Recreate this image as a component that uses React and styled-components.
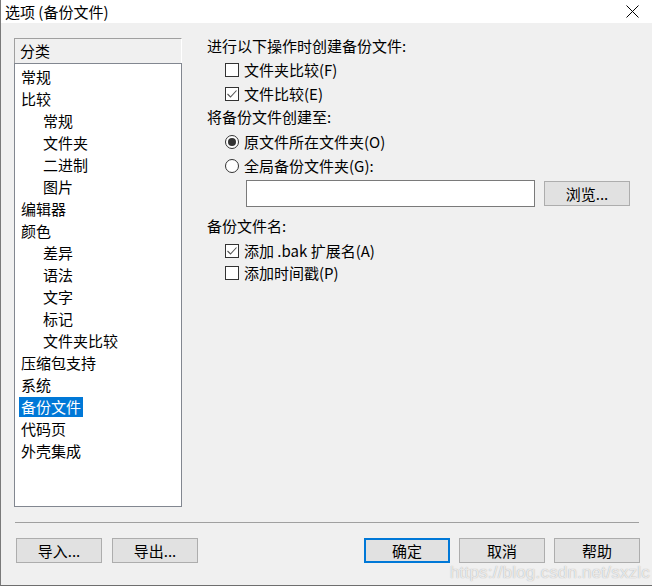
import React from 'react'
import styled, { createGlobalStyle } from 'styled-components'

const GlobalStyle = createGlobalStyle`
  html, body {
    margin: 0;
    padding: 0;
    background: #ffffff;
  }
  body {
    font-family: "Noto Sans CJK SC", "Noto Sans", sans-serif;
    font-size: 15px;
    color: #000;
  }
`

const Window = styled.div`
  position: relative;
  width: 651px;
  height: 585px;
  border-left: 1px solid #7a7a7a;
  border-bottom: 1px solid #6e6e6e;
  display: flex;
  flex-direction: column;
  background: #f0f0f0;
  overflow: hidden;
`

const TitleBar = styled.div`
  height: 23px;
  background: #ffffff;
  display: flex;
  align-items: center;
  justify-content: space-between;
  padding: 0 13px 0 4px;
  line-height: 20px;
  flex-shrink: 0;
`

const Body = styled.div`
  flex: 1;
  display: flex;
  flex-direction: column;
  padding: 15px 12px 0 13px;
`

const Main = styled.div`
  display: flex;
  height: 469px;
`

const Sidebar = styled.div`
  width: 168px;
  display: flex;
  flex-direction: column;
`

const SideHeader = styled.div`
  height: 24px;
  border-top: 1px solid #a0a0a0;
  border-left: 1px solid #a0a0a0;
  border-right: 1px solid #ffffff;
  display: flex;
  align-items: center;
  padding-left: 5px;
  line-height: 20px;
`

const List = styled.div`
  flex: 1;
  background: #ffffff;
  border: 1px solid #828790;
  padding-top: 2px;
`

const Item = styled.div`
  height: 22px;
  display: flex;
  align-items: center;
  padding-left: ${p => (p.$sub ? 26 : 4)}px;
  line-height: 20px;
`

const ItemText = styled.span`
  padding: 0 2px;
  height: 20px;
  background: ${p => (p.$active ? '#0078d7' : 'transparent')};
  color: ${p => (p.$active ? '#ffffff' : '#000000')};
`

const Options = styled.div`
  flex: 1;
  padding: 0 0 0 25px;
  display: flex;
  flex-direction: column;
`

const Heading = styled.div`
  height: 24px;
  display: flex;
  align-items: center;
  margin-top: ${p => p.$mt || 0}px;
  line-height: 20px;
`

const Row = styled.label`
  height: 24px;
  display: flex;
  align-items: center;
  gap: 5px;
  padding-left: 18px;
  margin-top: ${p => p.$mt || 0}px;
  line-height: 20px;
`

const Box = styled.span`
  width: 12px;
  height: 12px;
  border: 1px solid #333333;
  background: #ffffff;
  display: flex;
  align-items: center;
  justify-content: center;
`

const Radio = styled.span`
  width: 12px;
  height: 12px;
  border: 1px solid #333333;
  border-radius: 50%;
  background: #ffffff;
  display: flex;
  align-items: center;
  justify-content: center;
`

const Dot = styled.span`
  width: 8px;
  height: 8px;
  border-radius: 50%;
  background: #333333;
`

const PathRow = styled.div`
  display: flex;
  align-items: center;
  gap: 9px;
  padding-left: 39px;
  margin-top: 2px;
`

const PathInput = styled.div`
  width: 287px;
  height: 25px;
  border: 1px solid #7a7a7a;
  background: #ffffff;
`

const Button = styled.div`
  width: ${p => (p.$primary ? 82 : 84)}px;
  height: ${p => (p.$primary ? 21 : 23)}px;
  border: ${p => (p.$primary ? '2px solid #0078d7' : '1px solid #adadad')};
  background: #e1e1e1;
  display: flex;
  align-items: center;
  justify-content: center;
  line-height: 20px;
  box-sizing: content-box;
`

const Separator = styled.div`
  height: 1px;
  background: #a0a0a0;
  margin: 15px 1px 0 1px;
`

const Footer = styled.div`
  display: flex;
  align-items: center;
  margin-top: 15px;
  padding-left: 2px;
`

const Group = styled.div`
  display: flex;
  gap: ${p => p.$gap}px;
  margin-left: ${p => (p.$right ? 'auto' : '0')};
`

const Watermark = styled.div`
  position: absolute;
  right: 2px;
  bottom: 2px;
  font-family: "Liberation Sans", Arial, sans-serif;
  font-size: 17px;
  color: rgba(255, 255, 255, 0.75);
  text-shadow: 0 0 1px rgba(120, 120, 120, 0.7);
  letter-spacing: 0.2px;
`

const categories = [
  ['常规'],
  ['比较'],
  ['常规', true],
  ['文件夹', true],
  ['二进制', true],
  ['图片', true],
  ['编辑器'],
  ['颜色'],
  ['差异', true],
  ['语法', true],
  ['文字', true],
  ['标记', true],
  ['文件夹比较', true],
  ['压缩包支持'],
  ['系统'],
  ['备份文件', false, true],
  ['代码页'],
  ['外壳集成'],
]

function Check({ checked }) {
  return (
    <Box>
      {checked && (
        <svg width="12" height="12" viewBox="0 0 12 12">
          <polyline points="1.5,6 4.5,9 10.5,2.5" fill="none" stroke="#555" strokeWidth="1.1" />
        </svg>
      )}
    </Box>
  )
}

function App() {
  return (
    <Window>
      <GlobalStyle />
      <TitleBar>
        <span>选项 (备份文件)</span>
        <svg width="13" height="13" viewBox="0 0 13 13">
          <path d="M0.5 0.5 L12.5 12.5 M12.5 0.5 L0.5 12.5" stroke="#000" strokeWidth="1" />
        </svg>
      </TitleBar>
      <Body>
        <Main>
          <Sidebar>
            <SideHeader>分类</SideHeader>
            <List>
              {categories.map(([name, sub, active], i) => (
                <Item key={i} $sub={sub}>
                  <ItemText $active={active}>{name}</ItemText>
                </Item>
              ))}
            </List>
          </Sidebar>
          <Options>
            <Heading $mt={-4}>进行以下操作时创建备份文件:</Heading>
            <Row>
              <Check />
              文件夹比较(F)
            </Row>
            <Row>
              <Check checked />
              文件比较(E)
            </Row>
            <Heading $mt={-1}>将备份文件创建至:</Heading>
            <Row $mt={1}>
              <Radio><Dot /></Radio>
              原文件所在文件夹(O)
            </Row>
            <Row>
              <Radio />
              全局备份文件夹(G):
            </Row>
            <PathRow>
              <PathInput />
              <Button>浏览...</Button>
            </PathRow>
            <Heading $mt={7}>备份文件名:</Heading>
            <Row $mt={1}>
              <Check checked />
              添加 .bak 扩展名(A)
            </Row>
            <Row $mt={-2}>
              <Check />
              添加时间戳(P)
            </Row>
          </Options>
        </Main>
        <Separator />
        <Footer>
          <Group $gap={10}>
            <Button>导入...</Button>
            <Button>导出...</Button>
          </Group>
          <Group $gap={9} $right>
            <Button $primary>确定</Button>
            <Button>取消</Button>
            <Button>帮助</Button>
          </Group>
        </Footer>
      </Body>
      <Watermark>https://blog.csdn.net/sxzlc</Watermark>
    </Window>
  )
}

export default App
